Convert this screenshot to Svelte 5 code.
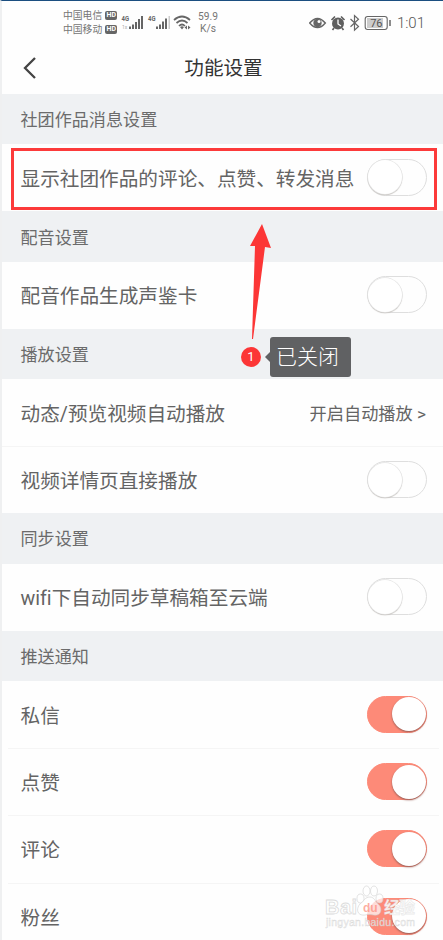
<script>
  let groups = [
    {
      title: "社团作品消息设置",
      rows: [{ label: "显示社团作品的评论、点赞、转发消息", on: false }],
    },
    {
      title: "配音设置",
      rows: [{ label: "配音作品生成声鉴卡", on: false }],
    },
    {
      title: "播放设置",
      rows: [
        { label: "动态/预览视频自动播放", value: "开启自动播放 >" },
        { label: "视频详情页直接播放", on: false },
      ],
    },
    {
      title: "同步设置",
      rows: [{ label: "wifi下自动同步草稿箱至云端", on: false }],
    },
    {
      title: "推送通知",
      inset: true,
      rows: [
        { label: "私信", on: true },
        { label: "点赞", on: true },
        { label: "评论", on: true },
        { label: "粉丝", on: true },
      ],
    },
  ];

  function toggle(row) {
    row.on = !row.on;
    groups = groups;
  }
</script>

<style>
  :global(body) {
    background: #fff;
    overflow: hidden;
  }

  main {
    position: relative;
    box-sizing: border-box;
    width: 443px;
    height: 940px;
    overflow: hidden;
    border-top: 1px solid #1b4e80;
    border-left: 2px solid #eff0f1;
    background: #fefefe;
    color: #646464;
    font-family: Roboto, "Noto Sans CJK SC", sans-serif;
    font-variant-ligatures: none;
  }

  .status {
    display: flex;
    align-items: center;
    height: 42px;
    padding: 1px 18px 0 61px;
    box-sizing: border-box;
    color: #757575;
  }

  .carriers {
    display: grid;
    gap: 0;
    width: 58px;
    font-size: 9.8px;
    line-height: 14px;
  }

  .carriers div {
    display: flex;
    align-items: center;
    white-space: nowrap;
  }

  .hd {
    margin-left: 3px;
    width: 12px;
    height: 9px;
    border-radius: 2px;
    background: #666;
    color: #fff;
    font-size: 7px;
    font-weight: 700;
    line-height: 9px;
    text-align: center;
  }

  .speed {
    margin-left: 2px;
    width: 26px;
    font-size: 10.2px;
    line-height: 12px;
    text-align: center;
  }

  .right {
    display: flex;
    align-items: center;
    margin-left: auto;
  }

  .time {
    margin-left: 5px;
    font-size: 15px;
    line-height: 18px;
    font-weight: 300;
    color: #555;
  }

  .status svg,
  .back svg {
    display: block;
  }

  header {
    display: grid;
    grid-template-columns: 60px 1fr 60px;
    align-items: center;
    height: 51px;
    box-sizing: border-box;
  }

  .back {
    padding: 0 0 2px 18px;
    border: 0;
    background: none;
  }

  h1 {
    margin: 0 0 0 2px;
    color: #333;
    font-size: 19.6px;
    font-weight: 400;
    line-height: 28px;
    text-align: center;
  }

  h2 {
    display: flex;
    align-items: center;
    height: 50.3px;
    margin: 0;
    padding: 0 0 1px 18.5px;
    box-sizing: border-box;
    background: #eff1f3;
    color: #6b6b6b;
    font-size: 17.1px;
    font-weight: 400;
  }

  .row {
    display: flex;
    align-items: center;
    justify-content: space-between;
    height: 67.1px;
    padding: 0 16px 1px 18.5px;
    box-sizing: border-box;
    font-size: 19.65px;
    white-space: nowrap;
  }

  .row + .row {
    border-top: 1px solid #f5f5f5;
  }

  .inset .row {
    height: 67.2px;
    margin: 0 4px 0 6px;
    padding: 0 12px 1px 12.5px;
  }

  .value {
    margin-right: 1px;
    font-size: 17.2px;
  }

  .switch {
    flex: none;
    width: 60px;
    height: 37px;
    padding: 0;
    border: 1px solid #dedede;
    border-radius: 19px;
    background: #fefefe;
  }

  .knob {
    display: block;
    width: 34px;
    height: 34px;
    border-radius: 50%;
    background: #fff;
    box-shadow: 0 0 0 0.7px #e2e2e2, 0 1px 1px 0.3px #c4c0bc;
  }

  .switch.on {
    border-color: #fd8a78;
    background: #fd8a78;
  }

  .on .knob {
    margin-left: 24px;
    box-shadow: 0 1px 2px #935a52;
  }

  .frame {
    position: absolute;
    left: 9px;
    top: 147px;
    width: 426px;
    height: 62px;
    box-sizing: border-box;
    border: 3px solid #fc3a3a;
    pointer-events: none;
  }

  .arrow {
    position: absolute;
    left: 238px;
    top: 219px;
    pointer-events: none;
  }

  .note {
    position: absolute;
    left: 239px;
    top: 336px;
    display: flex;
    align-items: center;
  }

  .number {
    width: 20px;
    height: 20px;
    border-radius: 50%;
    background: #fc3636;
    color: #fff;
    font-size: 13px;
    line-height: 20px;
    text-align: center;
  }

  .pointer {
    margin-left: 4px;
    border: 5px solid transparent;
    border-left-width: 0;
    border-right-color: #606163;
  }

  .tip {
    width: 81px;
    height: 40px;
    border-radius: 3px;
    background: #606163;
    color: #fff;
    font-size: 21px;
    font-weight: 300;
    line-height: 41px;
    text-align: center;
    text-indent: -6px;
  }

  .watermark {
    position: absolute;
    left: 322px;
    top: 882px;
    pointer-events: none;
  }
</style>

<main>
  <div class="status">
    <div class="carriers">
      <div>中国电信<span class="hd">HD</span></div>
      <div>中国移动<span class="hd">HD</span></div>
    </div>

    <svg width="72" height="20" viewBox="0 0 72 20" fill="#666">
      <g font-size="7" font-weight="700">
        <text x="0.5" y="8" textLength="7.5" lengthAdjust="spacingAndGlyphs">4G</text>
        <text x="27" y="8" textLength="7.5" lengthAdjust="spacingAndGlyphs">4G</text>
      </g>
      <text x="1" y="16" font-size="5" fill="#aaa">1x</text>
      <path d="M8 13.500h2V16H8zM11 11.500h2V16h-2zM14 9h2v7h-2zM17 6h2v10h-2zM20 3h2v13h-2z" />
      <path d="M35 13.500h2V16h-2zM38 11.500h2V16h-2zM41 8.500h2V16h-2zM44 5.500h2V16h-2z" />
      <path d="M47.500 3H49v13h-1.500z" fill="#ccc" />
      <g fill="none" stroke="#666" stroke-width="1.700">
        <path d="M53 7q8-7 16 0M55.500 10q5.500-5 11 0M58 13q3-3 6 0" />
      </g>
      <path d="M59 14l2 2.500 2-2.500q-2-1.300-4 0zM63.500 14.500l2.500-2v4zM69.500 14.500l-2.500-2v4z" />
    </svg>

    <div class="speed">59.9<br />K/s</div>

    <div class="right">
      <svg width="83" height="18" viewBox="0 0 83 18">
        <path d="M.700 9Q8.500-.200 16.300 9 8.500 18.200.700 9z" fill="none" stroke="#666" stroke-width="1.500" />
        <circle cx="8.500" cy="9" r="4.200" fill="#666" />
        <circle cx="10" cy="7.500" r="1.500" fill="#fff" />
        <circle cx="29" cy="9.500" r="6" fill="#5f5f5f" />
        <path d="M22.500 6l3.500-3.500M35.500 6L32 2.500M25 14l-1.500 2M33 14l1.500 2" stroke="#5f5f5f" stroke-width="1.700" />
        <path d="M29 5.500V10l3 2" fill="none" stroke="#fff" stroke-width="1.300" />
        <path d="M41.500 5l8 7.500-4 3.700V1.500l4 3.700-8 7.500" fill="none" stroke="#666" stroke-width="1.200" />
        <rect x="56.200" y="2.500" width="22" height="13" rx="2.500" fill="#fff" stroke="#666" stroke-width="1.100" />
        <path d="M58 4h16v10H58z" fill="#ccc" />
        <path d="M81 6v6" stroke="#666" stroke-width="1.500" />
        <text x="61.200" y="13" font-size="11" fill="#555">76</text>
      </svg>
      <span class="time">1:01</span>
    </div>
  </div>

  <header>
    <button class="back" aria-label="返回">
      <svg width="18" height="24" viewBox="0 0 18 24">
        <path d="M15 2L5 12l10 10" fill="none" stroke="#444" stroke-width="2.300" />
      </svg>
    </button>
    <h1>功能设置</h1>
  </header>

  {#each groups as group}
    <section class:inset={group.inset}>
      <h2>{group.title}</h2>
      {#each group.rows as row}
        <div class="row">
          <span>{row.label}</span>
          {#if row.value}
            <span class="value">{row.value}</span>
          {:else}
            <button
              class="switch"
              class:on={row.on}
              aria-label={row.label}
              on:click={() => toggle(row)}>
              <span class="knob"></span>
            </button>
          {/if}
        </div>
      {/each}
    </section>
  {/each}

  <div class="frame"></div>

  <svg class="arrow" width="36" height="122" viewBox="0 0 36 122">
    <path d="M22 4L10 26l5 0-3 93h1l12-92 6 1z" fill="#fc3636" />
  </svg>

  <div class="note">
    <span class="number">1</span>
    <span class="pointer"></span>
    <span class="tip">已关闭</span>
  </div>

  <svg class="watermark" width="96" height="50" viewBox="0 0 96 50">
    <g fill="#fff" fill-opacity="0.7" stroke="#ccc" stroke-opacity="0.7" stroke-width="0.800">
      <ellipse cx="36.500" cy="15.500" rx="3.500" ry="4.500" />
      <ellipse cx="42.500" cy="8" rx="3.500" ry="5" />
      <ellipse cx="50" cy="8" rx="3.500" ry="5" />
      <ellipse cx="55.500" cy="15.500" rx="3.500" ry="4.500" />
      <path d="M46 14c4 0 5 4 8 7 4 3 4 10-1 11-3 .500-5-.500-8-.500s-4 1-7 .500c-6-1-5-8-2-11 4-3 5-7 10-7z" />
      <g font-family="Liberation Sans, sans-serif" font-weight="700">
        <text x="1" y="31" font-size="20" textLength="32">Bai</text>
        <text x="39" y="29" font-size="12" fill="#fd8a78" stroke="none">du</text>
      </g>
      <text x="60" y="30" font-size="16" font-weight="700" fill-opacity="0.9" stroke-opacity="0.4" textLength="31">经验</text>
      <text x="2" y="43" font-size="10.500" font-family="Liberation Sans, sans-serif" stroke-width="0.500" textLength="89">jingyan.baidu.com</text>
    </g>
  </svg>
</main>
